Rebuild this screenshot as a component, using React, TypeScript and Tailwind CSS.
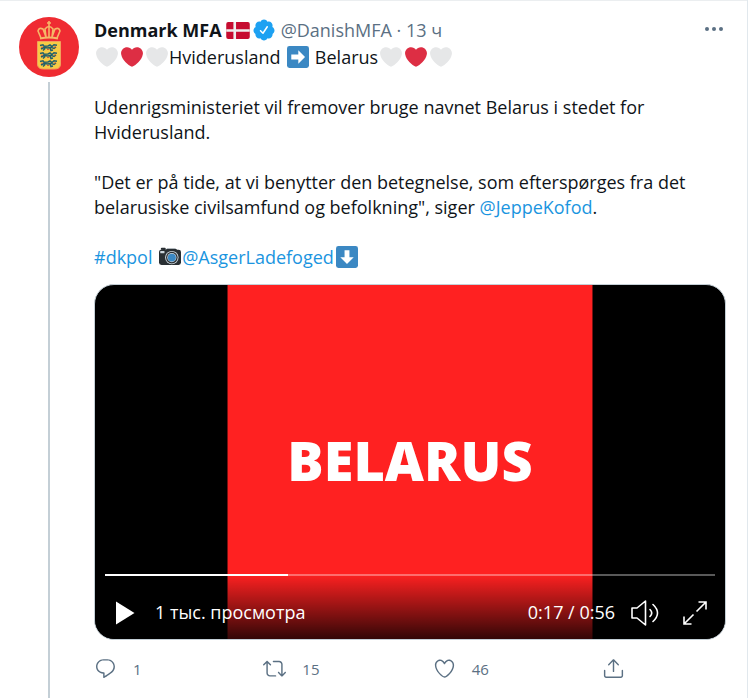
import type { ReactNode } from 'react';

const HEART =
  'M35.885 11.833c0-5.45-4.418-9.868-9.867-9.868-3.308 0-6.227 1.633-8.018 4.129-1.791-2.496-4.71-4.129-8.017-4.129-5.45 0-9.868 4.417-9.868 9.868 0 .772.098 1.52.266 2.241C1.751 22.587 11.216 31.568 18 34.034c6.783-2.466 16.249-11.447 17.617-19.959.17-.721.268-1.469.268-2.242z';

function Emoji({ label, children }: { label: string; children: ReactNode }) {
  return (
    <svg viewBox="0 0 36 36" role="img" aria-label={label} className="mr-px ml-[2px] inline-block size-[22px] align-[-4px]">
      {children}
    </svg>
  );
}

function Heart({ red = false }: { red?: boolean }) {
  return (
    <Emoji label={red ? 'red heart' : 'white heart'}>
      <path d={HEART} fill={red ? '#DD2E44' : '#E6E7E8'} />
    </Emoji>
  );
}

function Hearts() {
  return (
    <>
      <Heart />
      <Heart red />
      <Heart />
    </>
  );
}

function ArrowEmoji({ down = false }: { down?: boolean }) {
  return (
    <Emoji label={down ? 'down arrow' : 'right arrow'}>
      <rect width="36" height="36" rx="4" fill="#3B88C3" />
      <path
        d="M29.500 18 18.500 7v7H7v8h11.500v7z"
        fill="#fff"
        transform={down ? 'rotate(90 18 18)' : undefined}
      />
    </Emoji>
  );
}

function CameraEmoji() {
  return (
    <Emoji label="camera">
      <path d="M3 6V4.500Q3 3 4.500 3H9.500Q11 3 11 4.500V7z" fill="#292F33" />
      <path d="M11 7 13 4H27L29 7z" fill="#66757F" />
      <rect y="6" width="36" height="25" rx="4" fill="#292F33" />
      <rect x="2" y="8" width="7" height="4" rx="1" fill="#CCD6DD" />
      <rect x="12" y="5" width="17" height="3" rx="1" fill="#292F33" />
      <circle cx="21" cy="19" r="11" fill="#CCD6DD" />
      <circle cx="21" cy="19" r="9.500" fill="#292F33" />
      <circle cx="21" cy="19" r="7.500" fill="#CCD6DD" />
      <circle cx="21" cy="19" r="6.500" fill="#3B88C3" />
    </Emoji>
  );
}

function Icon({ paths, className = 'size-6' }: { paths: string[]; className?: string }) {
  return (
    <svg viewBox="0 0 24 24" fill="currentColor" aria-hidden="true" className={`shrink-0 ${className}`}>
      {paths.map((d) => (
        <path key={d} d={d} />
      ))}
    </svg>
  );
}

const VERIFIED =
  'M22.5 12.5c0-1.58-.875-2.95-2.148-3.6.154-.435.238-.905.238-1.4 0-2.21-1.71-3.998-3.818-3.998-.47 0-.92.084-1.336.25C14.818 2.415 13.51 1.5 12 1.5s-2.816.917-3.437 2.25c-.415-.165-.866-.25-1.336-.25-2.11 0-3.818 1.79-3.818 4 0 .494.083.964.237 1.4-1.272.65-2.147 2.018-2.147 3.6 0 1.495.782 2.798 1.942 3.486-.02.17-.032.34-.032.514 0 2.21 1.708 4 3.818 4 .47 0 .92-.086 1.335-.25.62 1.334 1.926 2.25 3.437 2.25 1.512 0 2.818-.916 3.437-2.25.415.163.865.248 1.336.248 2.11 0 3.818-1.79 3.818-4 0-.174-.012-.344-.033-.513 1.158-.687 1.943-1.99 1.943-3.484zm-6.616-3.334l-4.334 6.5c-.145.217-.382.334-.625.334-.143 0-.288-.04-.416-.126l-.115-.094-2.415-2.415c-.293-.293-.293-.768 0-1.06s.768-.294 1.06 0l1.77 1.767 3.825-5.74c.23-.345.696-.436 1.04-.207.346.23.44.696.21 1.04z';
const REPLY =
  'M14.046 2.242l-4.148-.01h-.002c-4.374 0-7.8 3.427-7.8 7.802 0 4.098 3.186 7.206 7.465 7.37v3.828c0 .108.044.286.12.403.142.225.384.347.632.347.138 0 .277-.038.402-.118.264-.168 6.473-4.14 8.088-5.506 1.902-1.61 3.04-3.97 3.043-6.312v-.017c-.006-4.367-3.43-7.787-7.8-7.788zm3.787 12.972c-1.134.96-4.862 3.405-6.772 4.643V16.67c0-.414-.335-.75-.75-.75h-.396c-3.66 0-6.318-2.476-6.318-5.886 0-3.534 2.768-6.302 6.3-6.302l4.147.01h.002c3.532 0 6.3 2.766 6.302 6.296-.003 1.91-.942 3.844-2.514 5.176z';
const RETWEET =
  'M23.77 15.67c-.292-.293-.767-.293-1.06 0l-2.22 2.22V7.65c0-2.068-1.683-3.75-3.75-3.75h-5.85c-.414 0-.75.336-.75.75s.336.75.75.75h5.85c1.24 0 2.25 1.01 2.25 2.25v10.24l-2.22-2.22c-.293-.293-.768-.293-1.06 0s-.294.768 0 1.06l3.5 3.5c.145.147.337.22.53.22s.383-.072.53-.22l3.5-3.5c.294-.292.294-.767 0-1.06zm-10.66 3.28H7.26c-1.24 0-2.25-1.01-2.25-2.25V6.46l2.22 2.22c.148.147.34.22.532.22s.384-.073.53-.22c.293-.293.293-.768 0-1.06l-3.5-3.5c-.293-.294-.768-.294-1.06 0l-3.5 3.5c-.294.292-.294.767 0 1.06s.767.293 1.06 0l2.22-2.22V16.7c0 2.068 1.683 3.75 3.75 3.75h5.85c.414 0 .75-.336.75-.75s-.337-.75-.75-.75z';
const LIKE =
  'M12 21.638h-.014C9.403 21.59 1.95 14.856 1.95 8.478c0-3.064 2.525-5.754 5.403-5.754 2.29 0 3.83 1.58 4.646 2.73.814-1.148 2.354-2.73 4.645-2.73 2.88 0 5.404 2.69 5.404 5.755 0 6.376-7.454 13.11-10.037 13.157H12zM7.354 4.225c-2.08 0-3.903 1.988-3.903 4.255 0 5.74 7.034 11.596 8.55 11.658 1.518-.062 8.55-5.917 8.55-11.658 0-2.267-1.823-4.255-3.903-4.255-2.528 0-3.94 2.936-3.952 2.965-.23.562-1.156.562-1.387 0-.014-.03-1.425-2.965-3.954-2.965z';
const SHARE_ARROW =
  'M17.53 7.47l-5-5c-.293-.293-.768-.293-1.06 0l-5 5c-.294.293-.294.768 0 1.06s.767.294 1.06 0l3.72-3.72V15c0 .414.336.75.75.75s.75-.336.75-.75V4.81l3.72 3.72c.146.147.338.22.53.22s.384-.072.53-.22c.293-.293.293-.767 0-1.06z';
const SHARE_TRAY =
  'M19.708 21.944H4.292C3.028 21.944 2 20.916 2 19.652V14c0-.414.336-.75.75-.75s.75.336.75.75v5.652c0 .437.355.792.792.792h15.416c.437 0 .792-.355.792-.792V14c0-.414.336-.75.75-.75s.75.336.75.75v5.652c0 1.264-1.028 2.292-2.292 2.292z';

function Lion({ y }: { y: number }) {
  return (
    <g transform={`translate(21 ${y})`}>
      <path
        d="M0 1.500 3 .800 4 2.200 8 2 10 1 12 2.500 14 .800 17 1.200M1 5 4 3.500 8 4 11 3.200 14 4.500 16 3M5 4.500 3 6.500M10 4 11 6.500 13 6"
        fill="none"
        stroke="#23606b"
        strokeWidth="1.500"
      />
      <path d="M1 3.200h2M7 5.500h2M14 3h2" stroke="#c9463a" strokeWidth=".8" />
    </g>
  );
}

function Avatar() {
  return (
    <svg viewBox="0 0 60 60" role="img" aria-label="Denmark MFA" className="size-[60px] shrink-0">
      <circle cx="30" cy="30" r="30" fill="#EF2B32" />
      <g fill="none" stroke="#F5B767" strokeWidth="1.600">
        <path d="M30 4v5M28 6h4" />
        <path d="M22 21 19 14Q20 10 24 12L27 20M38 21 41 14Q40 10 36 12L33 20M27 20 26 12Q30 7 34 12L33 20M30 10v10" />
        <path d="M21 21.500Q30 19.500 39 21.500" strokeWidth="2.200" />
      </g>
      <path d="M18.500 24.500h23V44v3q0 5-6 5h-11q-6 0-6-5z" fill="#F7CC45" stroke="#F2A15B" />
      <Lion y={27} />
      <Lion y={35} />
      <Lion y={43} />
    </svg>
  );
}

function Action({ label, count, paths }: { label: string; count?: number; paths: string[] }) {
  return (
    <button type="button" aria-label={label} className="flex items-center gap-4 text-[15px] leading-6">
      <Icon paths={paths} className="size-[23px]" />
      {count !== undefined && <span>{count}</span>}
    </button>
  );
}

function Link({ children }: { children: ReactNode }) {
  return (
    <a href="#" className="text-[#1b95e0]">
      {children}
    </a>
  );
}

function Video() {
  return (
    <section aria-label="Video" className="relative mt-[14px] aspect-video overflow-hidden rounded-[20px] border border-[#c4cfd6] bg-black">
      <div className="mx-auto flex h-full w-[58%] items-center justify-center border-x border-[#7a1010] bg-[#ff2121] pb-1">
        <span className="font-['Open_Sans',sans-serif] text-[54px] leading-none font-extrabold text-white">BELARUS</span>
      </div>
      <div className="absolute inset-x-0 bottom-0 bg-linear-to-t from-black/80 to-transparent px-[10px] pb-2 text-white">
        <div className="h-[2px] bg-white/35">
          <div className="h-full w-[30%] bg-white" />
        </div>
        <div className="mt-[19px] flex h-9 items-center text-[18px]">
          <button type="button" aria-label="Play" className="mr-5 ml-[10px]">
            <svg viewBox="0 0 20 24" className="h-6 w-5" fill="currentColor">
              <path d="M1 .5 19.500 12 1 23.500z" />
            </svg>
          </button>
          <span>1 тыс. просмотра</span>
          <span className="ml-auto">0:17 / 0:56</span>
          <button type="button" aria-label="Mute" className="ml-4">
            <svg viewBox="0 0 28 26" className="h-[26px] w-7" fill="none" stroke="currentColor" strokeWidth="1.600" strokeLinejoin="round" strokeLinecap="round">
              <path d="M1 8h5l8.500-7v24L6 18H1zM19 9.500q3.500 3.500 0 7M22 4.500q9 8.500 0 17" />
            </svg>
          </button>
          <button type="button" aria-label="Full screen" className="mr-2 ml-6">
            <svg viewBox="0 0 24 24" className="size-6" fill="none" stroke="currentColor" strokeWidth="1.600">
              <path d="M15.500 1H23v7.500M23 1 13.500 10.500M8.500 23H1v-7.500M1 23l9.500-9.500" />
            </svg>
          </button>
        </div>
      </div>
    </section>
  );
}

export default function App() {
  return (
    <div className="min-h-screen bg-white pr-[3px] font-['Open_Sans','Noto_Sans',sans-serif] text-[#0f1419]">
      <article className="flex min-h-screen gap-[15px] border-r border-[#e1e8ed] pr-[21px] pl-[19px] shadow-[inset_0_2px_0_-1px_#ebeef0]">
        <div className="flex flex-col items-center gap-[5px] pt-[17px]">
          <Avatar />
          <div className="w-[2px] grow bg-[#c4cfd6]" />
        </div>
        <div className="min-w-0 grow pt-[17px]">
          <header className="mb-[2px] flex h-[26px] items-center text-[18px]">
            <span className="font-bold">Denmark MFA</span>
            <svg viewBox="0 0 36 26" role="img" aria-label="Denmark" className="ml-1 h-[17px] w-6">
              <rect width="36" height="26" rx="3" fill="#C60C30" />
              <path d="M11 0h4v11h21v4H15v11h-4V15H0v-4h11z" fill="#EEE" />
            </svg>
            <Icon paths={[VERIFIED]} className="ml-[2px] size-6 text-[#1da1f2]" />
            <span className="ml-[5px] text-[#5b7083]">@DanishMFA · 13 ч</span>
            <button type="button" aria-label="More" className="ml-auto self-start text-[#5b7083]">
              <svg viewBox="0 0 24 24" fill="currentColor" className="size-6">
                <circle cx="5" cy="12" r="2" />
                <circle cx="12" cy="12" r="2" />
                <circle cx="19" cy="12" r="2" />
              </svg>
            </button>
          </header>
          <div className="text-[18px] leading-[25px]">
            <p>
              <Hearts />
              Hviderusland <ArrowEmoji /> Belarus
              <Hearts />
            </p>
            <p className="mt-[25px]">
              Udenrigsministeriet vil fremover bruge navnet Belarus i stedet for
              <br />
              Hviderusland.
            </p>
            <p className="mt-[25px]">
              "Det er på tide, at vi benytter den betegnelse, som efterspørges fra det
              <br />
              belarusiske civilsamfund og befolkning", siger <Link>@JeppeKofod</Link>.
            </p>
            <p className="mt-[25px]">
              <Link>#dkpol</Link> <CameraEmoji />
              <Link>@AsgerLadefoged</Link>
              <ArrowEmoji down />
            </p>
          </div>
          <Video />
          <div className="mt-[17px] mr-[101px] grid grid-cols-[1fr_1fr_1fr_auto] text-[#5b7083]">
            <Action label="Reply" count={1} paths={[REPLY]} />
            <Action label="Retweet" count={15} paths={[RETWEET]} />
            <Action label="Like" count={46} paths={[LIKE]} />
            <Action label="Share" paths={[SHARE_ARROW, SHARE_TRAY]} />
          </div>
        </div>
      </article>
    </div>
  );
}
